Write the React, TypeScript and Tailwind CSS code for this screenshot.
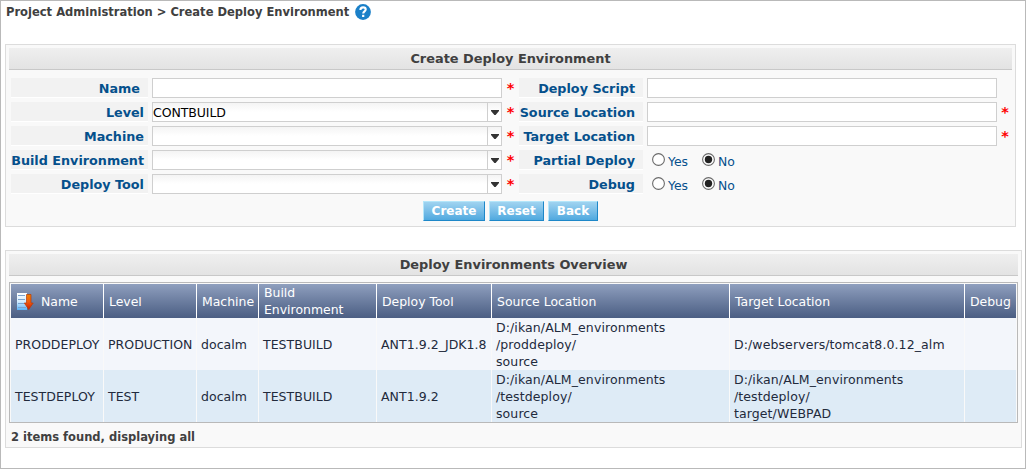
import React from 'react';

const panel = 'border border-[#dcdcdc] bg-[#f9f9f9] p-[3px]';
const panelTitle =
  'flex h-[22px] items-center justify-center border-b border-[#c8c8c8] bg-linear-to-b from-[#efefef] to-[#e3e3e3] pt-px text-[12.9px] font-bold text-[#404040]';

function Label({ children, inset = false }: { children: string; inset?: boolean }) {
  return (
    <div
      className={`flex h-5 items-center justify-end border-b border-white bg-[#f2f2f2] pt-[2px] text-[12.75px] font-bold whitespace-nowrap text-[#05508c] ${inset ? 'pr-2' : 'pr-1'}`}
    >
      <span>{children}</span>
    </div>
  );
}

function Star() {
  return <span className="h-5 text-center text-[14.5px] leading-[21px] font-bold text-[#f00]">*</span>;
}

function TextInput() {
  return <div className="h-5 border border-[#cfcfcf] bg-white" />;
}

function Select({ value = '' }: { value?: string }) {
  return (
    <div className="flex h-5 border border-[#cfcfcf] bg-linear-to-b from-[#f4f4f4] to-white to-50%">
      <div className="flex flex-1 items-center pt-[2px] text-[12.5px] tracking-[-0.08px] text-black">{value}</div>
      <div className="flex w-[14px] items-center justify-center border-l border-[#cfcfcf]">
        <svg width="8" height="5" viewBox="0 0 8 5" className="mt-px">
          <path d="M0 0H8V1L4.6 5H3.4L0 1Z" fill="#333" />
        </svg>
      </div>
    </div>
  );
}

function Radio({ checked = false }: { checked?: boolean }) {
  return (
    <svg width="13" height="13" viewBox="0 0 13 13" className="mt-[3px]">
      <circle cx="6.5" cy="6.5" r="5.9" fill="#fff" stroke="#6a6a6a" strokeWidth="1.1" />
      {checked && <circle cx="6.5" cy="6.5" r="3.7" fill="#222" />}
    </svg>
  );
}

function YesNo() {
  return (
    <div className="flex h-5 items-start pl-[5px] text-[12.4px] text-[#05508c]">
      <Radio />
      <span className="w-[34px] pt-[3px] pl-[3px] leading-[17px]">Yes</span>
      <span className="w-[3px]" />
      <Radio checked />
      <span className="pt-[3px] pl-[3px] leading-[17px]">No</span>
    </div>
  );
}

function Button({ children, width }: { children: string; width: string }) {
  return (
    <button
      className={`${width} h-5 border border-t-[#b4e6fa] border-r-[#1e87c8] border-b-[#1e87c8] border-l-[#b4e6fa] bg-linear-to-b from-[#9fd3f0] to-[#4fa9df] pt-px text-[12px] leading-[17px] font-bold text-white`}
    >
      {children}
    </button>
  );
}

function SortIcon() {
  return (
    <svg width="18" height="18" viewBox="0 0 18 18" className="mr-[6px] ml-px shrink-0">
      <defs>
        <linearGradient id="page" x1="0" y1="0" x2="0" y2="1">
          <stop offset="0" stopColor="#fff" />
          <stop offset="0.5" stopColor="#d3ecff" />
          <stop offset="1" stopColor="#59b2f8" />
        </linearGradient>
        <linearGradient id="arrow" x1="0" y1="0" x2="0" y2="1">
          <stop offset="0" stopColor="#ee8200" />
          <stop offset="0.5" stopColor="#f05a10" />
          <stop offset="1" stopColor="#c81e00" />
        </linearGradient>
      </defs>
      <rect x="0" y="1" width="10" height="17" fill="url(#page)" />
      <path d="M1 3.5H8M1 7.5H8M1 11.5H7M1 15.5H9" stroke="#7ba3cf" />
      <path d="M9.5 2.5H14V11H16.2L11.7 17.5L7.3 11H9.5Z" fill="url(#arrow)" stroke="#b83a08" strokeWidth="0.7" />
    </svg>
  );
}

const headers = ['Name', 'Level', 'Machine', 'Build\nEnvironment', 'Deploy Tool', 'Source Location', 'Target Location', 'Debug'];

const rows = [
  ['PRODDEPLOY', 'PRODUCTION', 'docalm', 'TESTBUILD', 'ANT1.9.2_JDK1.8', 'D:/ikan/ALM_environments\n/proddeploy/\nsource', 'D:/webservers/tomcat8.0.12_alm', ''],
  ['TESTDEPLOY', 'TEST', 'docalm', 'TESTBUILD', 'ANT1.9.2', 'D:/ikan/ALM_environments\n/testdeploy/\nsource', 'D:/ikan/ALM_environments\n/testdeploy/\ntarget/WEBPAD', ''],
];

const columns = 'grid grid-cols-[92px_92px_61px_117px_114px_237px_234px_51px] gap-x-px';

export default function App() {
  return (
    <div className="h-[469px] w-[1026px] overflow-hidden border border-[#b9b9b9] bg-white pl-1 font-['Verdana','DejaVu_Sans',sans-serif]">
      <div className="flex h-[43px] items-start pl-px text-[11.52px] leading-[22px] font-bold text-[#404040]">
        <span className="w-[343px] whitespace-nowrap">Project Administration &gt; Create Deploy Environment</span>
        <svg width="16" height="16" viewBox="0 0 16 16" className="mt-[3px] ml-[6px]">
          <circle cx="8" cy="8" r="7.9" fill="#1b80c8" />
          <path d="M5.4 6.1C5.4 4.3 6.5 3.4 8.1 3.4C9.7 3.4 10.7 4.3 10.7 5.6C10.7 7.3 8.2 7.5 8.2 9.4" fill="none" stroke="#fff" strokeWidth="2.1" />
          <rect x="7.1" y="10.8" width="2.2" height="2.2" fill="#fff" />
        </svg>
      </div>

      <section className={`${panel} h-[183px] w-[1011px]`}>
        <h2 className={panelTitle}>Create Deploy Environment</h2>
        <div className="grid auto-rows-[20px] grid-cols-[137px_350px_17px_124px_350px_16px] gap-y-1 pt-2 pl-[2px] [&>*:nth-child(6n+2)]:ml-1 [&>*:nth-child(6n+2)]:-mr-1 [&>*:nth-child(6n+3)]:pl-2 [&>*:nth-child(6n+4)]:ml-1 [&>*:nth-child(6n+4)]:-mr-1 [&>*:nth-child(6n+5)]:ml-2 [&>*:nth-child(6n+5)]:-mr-2 [&>*:nth-child(6n+6)]:-mr-2 [&>*:nth-child(6n+6)]:pl-2">
          <Label inset>Name</Label>
          <TextInput />
          <Star />
          <Label inset>Deploy Script</Label>
          <TextInput />
          <span />
          <Label>Level</Label>
          <Select value="CONTBUILD" />
          <Star />
          <Label inset>Source Location</Label>
          <TextInput />
          <Star />
          <Label>Machine</Label>
          <Select />
          <Star />
          <Label inset>Target Location</Label>
          <TextInput />
          <Star />
          <Label>Build Environment</Label>
          <Select />
          <Star />
          <Label inset>Partial Deploy</Label>
          <YesNo />
          <span />
          <Label>Deploy Tool</Label>
          <Select />
          <Star />
          <Label inset>Debug</Label>
          <YesNo />
          <span />
        </div>
        <div className="mt-[7px] flex gap-1 pl-[414px]">
          <Button width="w-[62px]">Create</Button>
          <Button width="w-[55px]">Reset</Button>
          <Button width="w-[50px]">Back</Button>
        </div>
      </section>

      <section className={`${panel} mt-[23px] h-[198px] w-[1017px]`}>
        <h2 className={panelTitle}>Deploy Environments Overview</h2>
        <div className="mt-[6px] h-[141px] border border-[#b9b9b9] bg-[#f9f9f9] p-px text-[12.5px] leading-[17px]">
          <div className={`${columns} h-[34px] bg-white text-[12.45px] text-white`}>
            {headers.map((h, i) => (
              <div key={h} className="flex items-center bg-linear-to-b from-[#8f9fbe] to-[#4b5e83] pl-[5px] whitespace-pre">
                {i === 0 && <SortIcon />}
                <span>{h}</span>
              </div>
            ))}
          </div>
          {rows.map((row, r) => (
            <div key={row[0]} className={`${columns} h-[51px] ${r === 1 ? 'mt-px' : ''}`}>
              {row.map((cell, c) => (
                <div
                  key={c}
                  className={`flex items-center pt-px pl-1 whitespace-pre text-[#222a3c] ${r === 0 ? 'bg-[#f3f6fb]' : 'bg-[#deebf6]'} ${c > 4 ? 'tracking-[0.1px]' : 'tracking-[0.04px]'}`}
                >
                  <span>{cell}</span>
                </div>
              ))}
            </div>
          ))}
        </div>
        <div className="pl-[2px] text-[11.5px] leading-[29px] font-bold text-[#404040]">2 items found, displaying all</div>
      </section>
    </div>
  );
}
